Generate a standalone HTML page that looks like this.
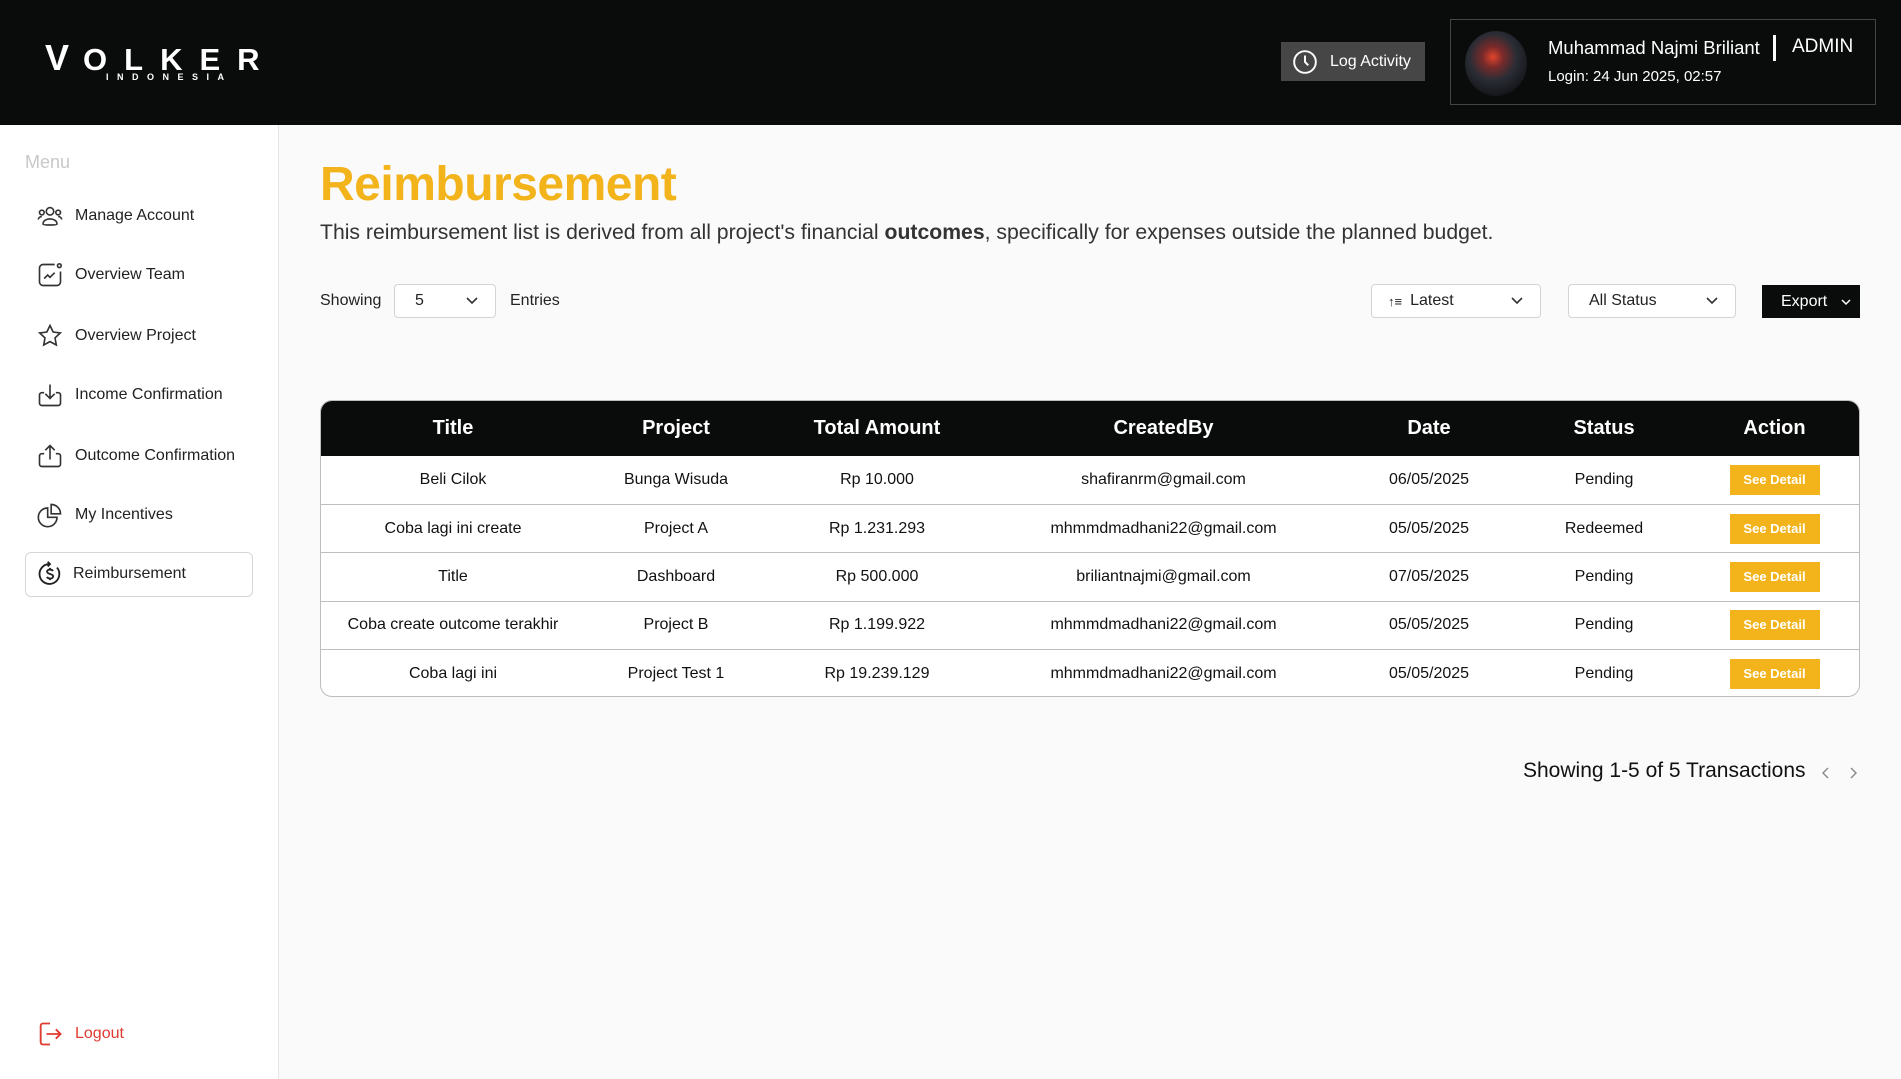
<!DOCTYPE html>
<html><head><meta charset="utf-8"><style>
*{box-sizing:border-box;margin:0;padding:0}
body{width:1901px;height:1079px;overflow:hidden;font-family:"Liberation Sans",sans-serif;background:#fafafa;position:relative;color:#111}
.hdr{position:absolute;left:0;top:0;width:1901px;height:125px;background:#0a0b0b}
.side{position:absolute;left:0;top:125px;width:279px;height:954px;background:#fff;border-right:1px solid #e6e6e6}
.mi{position:absolute;left:36px;height:30px;display:flex;align-items:center;font-size:16px;color:#222}
.mi svg{width:28px;height:28px;margin-right:11px}
.abs{position:absolute}
.sel{position:absolute;border:1px solid #d4d4d4;border-radius:4px;background:#fff;font-size:16px;display:flex;align-items:center;color:#222}
table{border-collapse:collapse;width:100%}
th{height:55px;background:#0a0b0b;color:#fff;font-size:20px;font-weight:bold}
td{height:48.4px;text-align:center;font-size:16px;border-top:1px solid #bdbdbd;color:#111}
.btn{display:inline-block;background:#f2b31b;color:#fff;font-weight:bold;font-size:13px;width:90px;height:30px;line-height:30px}
</style></head><body>
<div class="hdr">
  <div class="abs" style="left:45px;top:40px;color:#fff;font-weight:bold;font-size:31px;letter-spacing:17px;line-height:36px">
    <span style="font-size:36px;letter-spacing:14px">V</span>OLKER</div>
  <div class="abs" style="left:106px;top:72px;color:#fff;font-weight:bold;font-size:9px;letter-spacing:8.5px">INDONESIA</div>
  <div class="abs" style="left:1281px;top:42px;width:144px;height:39px;background:#464646;display:flex;align-items:center;color:#fff;font-size:16px">
    <svg width="26" height="26" viewBox="0 0 24 24" style="margin:0 12px 0 11px" fill="none" stroke="#fff" stroke-width="1.8"><circle cx="12" cy="12" r="10"/><path d="M12 6v6l3 3"/></svg>Log Activity</div>
  <div class="abs" style="left:1450px;top:19px;width:426px;height:86px;border:1px solid #444"></div>
  <div class="abs" style="left:1465px;top:31px;width:62px;height:65px;border-radius:50%;background:radial-gradient(circle at 45% 40%,#e0442a 0,#7a2a2a 20%,#2a2d35 45%,#15161a 75%)"></div>
  <div class="abs" style="left:1548px;top:37px;color:#fff;font-size:18.5px">Muhammad Najmi Briliant</div>
  <div class="abs" style="left:1773px;top:35px;width:3px;height:26px;background:#fff"></div>
  <div class="abs" style="left:1792px;top:36px;color:#fff;font-size:19px">ADMIN</div>
  <div class="abs" style="left:1548px;top:68px;color:#fff;font-size:15px">Login: 24 Jun 2025, 02:57</div>
</div>
<div class="side">
  <div class="abs" style="left:25px;top:27px;font-size:18px;color:#c8c8c8">Menu</div>
  <div class="mi" style="top:76px"><svg viewBox="0 0 24 24" fill="none" stroke="#333" stroke-width="1.4"><circle cx="12" cy="8" r="3.2"/><path d="M6 19c0-3 3-4.5 6-4.5s6 1.5 6 4.5c0 1-12 1-12 0z"/><circle cx="5" cy="9" r="2"/><circle cx="19" cy="9" r="2"/><path d="M2 15c0-1.5 1.5-2.5 3-2.5M22 15c0-1.5-1.5-2.5-3-2.5"/></svg>Manage Account</div>
  <div class="mi" style="top:135px"><svg viewBox="0 0 24 24" fill="none" stroke="#333" stroke-width="1.4"><path d="M16 3H6a3 3 0 0 0-3 3v12a3 3 0 0 0 3 3h12a3 3 0 0 0 3-3V9"/><circle cx="20" cy="4" r="1.6"/><path d="M7 15l3-3 2 2 4-4"/></svg>Overview Team</div>
  <div class="mi" style="top:196px"><svg viewBox="0 0 24 24" fill="none" stroke="#333" stroke-width="1.4"><path d="M12 3l2.7 5.6 6.1.8-4.5 4.2 1.1 6.1L12 16.8l-5.4 2.9 1.1-6.1L3.2 9.4l6.1-.8z"/></svg>Overview Project</div>
  <div class="mi" style="top:255px"><svg viewBox="0 0 24 24" fill="none" stroke="#333" stroke-width="1.4"><path d="M7 10H5a2 2 0 0 0-2 2v7a2 2 0 0 0 2 2h14a2 2 0 0 0 2-2v-7a2 2 0 0 0-2-2h-2"/><path d="M12 3v12M8 11l4 4 4-4"/></svg>Income Confirmation</div>
  <div class="mi" style="top:316px"><svg viewBox="0 0 24 24" fill="none" stroke="#333" stroke-width="1.4"><path d="M7 10H5a2 2 0 0 0-2 2v7a2 2 0 0 0 2 2h14a2 2 0 0 0 2-2v-7a2 2 0 0 0-2-2h-2"/><path d="M12 15V3M8 7l4-4 4 4"/></svg>Outcome Confirmation</div>
  <div class="mi" style="top:375px"><svg viewBox="0 0 24 24" fill="none" stroke="#333" stroke-width="1.4"><path d="M10 6a8 8 0 1 0 8 8h-8z"/><path d="M13 3a8 8 0 0 1 8 8h-8z"/></svg>My Incentives</div>
  <div class="abs" style="left:25px;top:427px;width:228px;height:45px;border:1px solid #d6d6d6;border-radius:6px"></div>
  <div class="mi" style="top:434px"><svg viewBox="0 0 24 24" fill="none" stroke="#222" stroke-width="1.6" style="margin-right:9px"><path d="M18 6.5A8.5 8.5 0 1 1 12 3.5"/><path d="M10 1.5l2 2-2 2"/><path d="M14.5 9.5c-.5-1-1.5-1.3-2.5-1.3-1.4 0-2.5.7-2.5 1.8 0 2.6 5.2 1.4 5.2 4 0 1.2-1.2 1.9-2.7 1.9-1.2 0-2.2-.5-2.6-1.4M12 6.8v1.4M12 15.9v1.4"/></svg>Reimbursement</div>
  <div class="mi" style="top:894px;color:#e03a2f"><svg viewBox="0 0 24 24" fill="none" stroke="#e03a2f" stroke-width="1.6"><path d="M12 3H6a2 2 0 0 0-2 2v14a2 2 0 0 0 2 2h6"/><path d="M9 12h12M17 8l4 4-4 4"/></svg>Logout</div>
</div>
<div class="abs" style="left:320px;top:157px;font-size:48px;font-weight:bold;color:#f2b31b;letter-spacing:-0.5px">Reimbursement</div>
<div class="abs" style="left:320px;top:221px;font-size:21.2px;color:#333">This reimbursement list is derived from all project's financial <b>outcomes</b>, specifically for expenses outside the planned budget.</div>
<div class="abs" style="left:320px;top:292px;font-size:16px;color:#222">Showing</div>
<div class="sel" style="left:394px;top:284px;width:102px;height:34px;padding-left:20px">5<svg width="14" height="10" viewBox="0 0 14 10" style="position:absolute;right:16px" fill="none" stroke="#333" stroke-width="1.6"><path d="M2 2l5 5 5-5"/></svg></div>
<div class="abs" style="left:510px;top:292px;font-size:16px;color:#222">Entries</div>
<div class="sel" style="left:1371px;top:284px;width:170px;height:34px;padding-left:16px"><span style="font-size:13px;font-weight:bold;margin-right:8px">↑≡</span>Latest<svg width="14" height="10" viewBox="0 0 14 10" style="position:absolute;right:16px" fill="none" stroke="#333" stroke-width="1.6"><path d="M2 2l5 5 5-5"/></svg></div>
<div class="sel" style="left:1568px;top:284px;width:168px;height:34px;padding-left:20px">All Status<svg width="14" height="10" viewBox="0 0 14 10" style="position:absolute;right:16px" fill="none" stroke="#333" stroke-width="1.6"><path d="M2 2l5 5 5-5"/></svg></div>
<div class="abs" style="left:1762px;top:285px;width:98px;height:33px;background:#0a0b0b;color:#fff;font-size:16px;display:flex;align-items:center;padding-left:19px">Export<svg width="12" height="8" viewBox="0 0 12 8" style="position:absolute;right:8px" fill="none" stroke="#fff" stroke-width="1.5"><path d="M2 2l4 4 4-4"/></svg></div>
<div class="abs" style="left:320px;top:400px;width:1540px;height:297px;border:1px solid #bdbdbd;border-radius:12px;overflow:hidden;background:#fff">
<table>
<colgroup><col style="width:264px"><col style="width:182px"><col style="width:220px"><col style="width:353px"><col style="width:178px"><col style="width:172px"><col></colgroup>
<tr><th>Title</th><th>Project</th><th>Total Amount</th><th>CreatedBy</th><th>Date</th><th>Status</th><th>Action</th></tr>
<tr><td style="border-top:0">Beli Cilok</td><td style="border-top:0">Bunga Wisuda</td><td style="border-top:0">Rp 10.000</td><td style="border-top:0">shafiranrm@gmail.com</td><td style="border-top:0">06/05/2025</td><td style="border-top:0">Pending</td><td style="border-top:0"><span class="btn">See Detail</span></td></tr>
<tr><td>Coba lagi ini create</td><td>Project A</td><td>Rp 1.231.293</td><td>mhmmdmadhani22@gmail.com</td><td>05/05/2025</td><td>Redeemed</td><td><span class="btn">See Detail</span></td></tr>
<tr><td>Title</td><td>Dashboard</td><td>Rp 500.000</td><td>briliantnajmi@gmail.com</td><td>07/05/2025</td><td>Pending</td><td><span class="btn">See Detail</span></td></tr>
<tr><td>Coba create outcome terakhir</td><td>Project B</td><td>Rp 1.199.922</td><td>mhmmdmadhani22@gmail.com</td><td>05/05/2025</td><td>Pending</td><td><span class="btn">See Detail</span></td></tr>
<tr><td>Coba lagi ini</td><td>Project Test 1</td><td>Rp 19.239.129</td><td>mhmmdmadhani22@gmail.com</td><td>05/05/2025</td><td>Pending</td><td><span class="btn">See Detail</span></td></tr>
</table></div>
<div class="abs" style="left:1523px;top:759px;font-size:21px;color:#111">Showing 1-5 of 5 Transactions</div>
<svg class="abs" style="left:1821px;top:766px" width="10" height="14" viewBox="0 0 10 14" fill="none" stroke="#888" stroke-width="1.4"><path d="M7 2L2 7l5 5"/></svg>
<svg class="abs" style="left:1848px;top:766px" width="10" height="14" viewBox="0 0 10 14" fill="none" stroke="#888" stroke-width="1.4"><path d="M3 2l5 5-5 5"/></svg>
</body></html>
